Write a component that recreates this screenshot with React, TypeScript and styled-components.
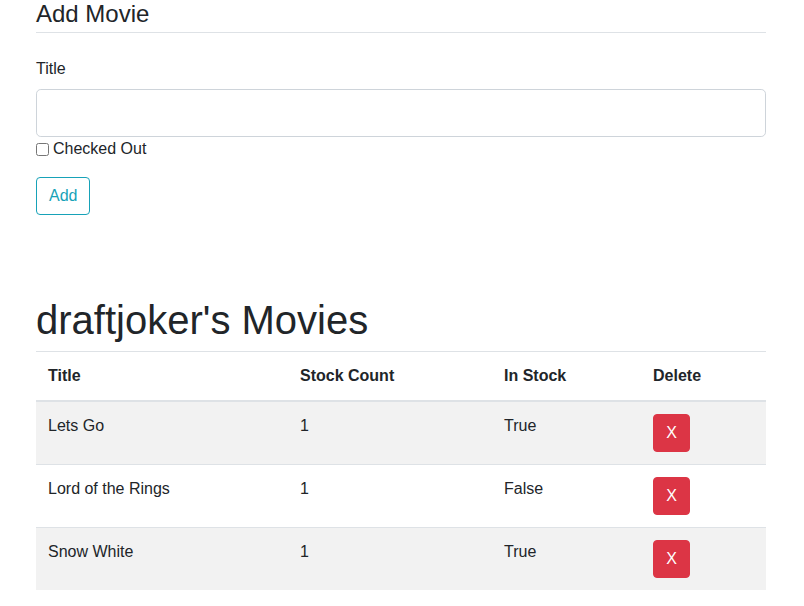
import React, { useState } from "react";
import styled, { createGlobalStyle } from "styled-components";

const GlobalStyle = createGlobalStyle`
  * { box-sizing: border-box; }
  body {
    margin: 0;
    background: #fff;
    color: #212529;
    font-family: "Liberation Sans", Arial, sans-serif;
    font-size: 16px;
    line-height: 1.5;
  }
`;

const Container = styled.div`
  width: 730px;
  margin: 0 auto 0 36px;
`;

const FormHeading = styled.h4`
  margin: 0;
  font-size: 24px;
  font-weight: 400;
  line-height: 28.8px;
  padding-bottom: 3px;
  border-bottom: 1px solid #dee2e6;
`;

const FormGroup = styled.div`
  margin-top: 24px;
`;

const Label = styled.label`
  display: block;
  line-height: 24px;
  margin-bottom: 8px;
`;

const Input = styled.input`
  display: block;
  width: 100%;
  height: 48px;
  padding: 8px 16px;
  font-size: 20px;
  font-family: inherit;
  color: #495057;
  border: 1px solid #ced4da;
  border-radius: 4.8px;
  outline: none;
`;

const CheckRow = styled.label`
  display: flex;
  align-items: center;
  line-height: 24px;
  height: 24px;

  input {
    width: 13px;
    height: 13px;
    margin: 1px 4px 0 0;
  }
`;

const AddButton = styled.button`
  margin-top: 16px;
  height: 38px;
  padding: 6px 12px;
  font-family: inherit;
  font-size: 16px;
  line-height: 24px;
  color: #17a2b8;
  background: transparent;
  border: 1px solid #17a2b8;
  border-radius: 4px;
  cursor: pointer;
`;

const ListHeading = styled.h1`
  margin: 81px 0 7px;
  font-size: 40px;
  font-weight: 400;
  line-height: 48px;
`;

const Table = styled.table`
  width: 100%;
  border-collapse: collapse;
  table-layout: fixed;
`;

const Th = styled.th<{ $w: number }>`
  width: ${(p) => p.$w}px;
  text-align: left;
  font-weight: 700;
  padding: 12px;
  line-height: 24px;
  border-top: 1px solid #dee2e6;
  border-bottom: 2px solid #dee2e6;
`;

const Row = styled.tr<{ $striped: boolean }>`
  background: ${(p) => (p.$striped ? "#f2f2f2" : "#fff")};
`;

const Td = styled.td`
  padding: 12px;
  line-height: 24px;
  vertical-align: top;
  border-top: 1px solid #dee2e6;
`;

const DeleteButton = styled.button`
  display: block;
  width: 37px;
  height: 38px;
  padding: 0;
  font-family: inherit;
  font-size: 16px;
  color: #fff;
  background: #dc3545;
  border: 1px solid #dc3545;
  border-radius: 4px;
  cursor: pointer;
`;

type Movie = { title: string; count: number; inStock: boolean };

const initialMovies: Movie[] = [
  { title: "Lets Go", count: 1, inStock: true },
  { title: "Lord of the Rings", count: 1, inStock: false },
  { title: "Snow White", count: 1, inStock: true },
];

export default function App() {
  const [movies, setMovies] = useState<Movie[]>(initialMovies);
  const [title, setTitle] = useState("");
  const [checkedOut, setCheckedOut] = useState(false);

  const addMovie = () => {
    if (!title.trim()) return;
    setMovies([...movies, { title, count: 1, inStock: !checkedOut }]);
    setTitle("");
    setCheckedOut(false);
  };

  return (
    <>
      <GlobalStyle />
      <Container>
        <FormHeading>Add Movie</FormHeading>
        <FormGroup>
          <Label htmlFor="title">Title</Label>
          <Input id="title" value={title} onChange={(e) => setTitle(e.target.value)} />
        </FormGroup>
        <CheckRow>
          <input
            type="checkbox"
            checked={checkedOut}
            onChange={(e) => setCheckedOut(e.target.checked)}
          />
          Checked Out
        </CheckRow>
        <AddButton onClick={addMovie}>Add</AddButton>

        <ListHeading>draftjoker's Movies</ListHeading>
        <Table>
          <thead>
            <tr>
              <Th $w={252}>Title</Th>
              <Th $w={204}>Stock Count</Th>
              <Th $w={149}>In Stock</Th>
              <Th $w={125}>Delete</Th>
            </tr>
          </thead>
          <tbody>
            {movies.map((m, i) => (
              <Row key={m.title + i} $striped={i % 2 === 0}>
                <Td>{m.title}</Td>
                <Td>{m.count}</Td>
                <Td>{m.inStock ? "True" : "False"}</Td>
                <Td>
                  <DeleteButton onClick={() => setMovies(movies.filter((_, j) => j !== i))}>
                    X
                  </DeleteButton>
                </Td>
              </Row>
            ))}
          </tbody>
        </Table>
      </Container>
    </>
  );
}
